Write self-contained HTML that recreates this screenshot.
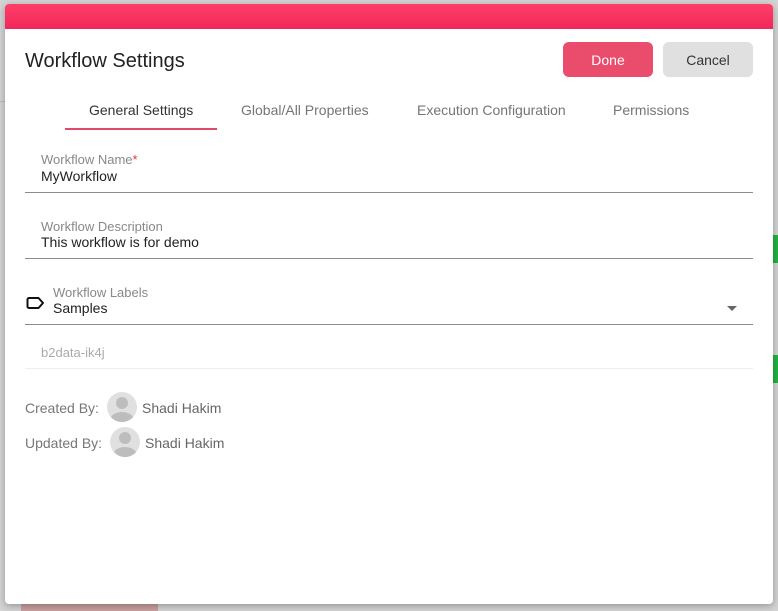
<!DOCTYPE html>
<html><head><style>
body{margin:0;width:778px;height:611px;background:#d4d4d4;position:relative;overflow:hidden;font-family:"Liberation Sans",sans-serif}
.modal{position:absolute;left:5px;top:4px;width:768px;height:600px;background:#fff;border-radius:4px;box-shadow:0 2px 8px rgba(0,0,0,.3);overflow:hidden}
.bar{height:25px;background:linear-gradient(#ff3f68,#f0275a)}
.abs{position:absolute}
.lbl{font-size:13px;color:#888}
.val{font-size:14px;color:#222}
.line{position:absolute;left:20px;width:728px;height:1px;background:#8c8c8c}
.tab{position:absolute;top:98px;font-size:14px;color:#757575}
.av{display:inline-block;width:30px;height:30px;border-radius:50%;background:#e0e0e0;position:absolute;overflow:hidden}
.av:before{content:"";position:absolute;left:9px;top:5px;width:12px;height:12px;border-radius:50%;background:#bdbdbd}
.av:after{content:"";position:absolute;left:3px;top:20px;width:24px;height:16px;border-radius:50%;background:#bdbdbd}
</style></head><body>
<div class="abs" style="left:0;top:101px;width:5px;height:1px;background:#bbb"></div>
<div class="abs" style="left:773px;top:235px;width:5px;height:28px;background:#22b540"></div>
<div class="abs" style="left:773px;top:355px;width:5px;height:28px;background:#22b540"></div>
<div class="abs" style="left:21px;top:604px;width:137px;height:7px;background:#c9a1a1"></div>
<div class="modal">
<div class="bar"></div>
<div class="abs" style="left:20px;top:46px;font-size:20px;color:#222">Workflow Settings</div>
<div class="abs" style="left:558px;top:38px;width:90px;height:35px;background:#ea4c6b;border-radius:6px;color:#fff;font-size:14px;text-align:center;line-height:36px">Done</div>
<div class="abs" style="left:658px;top:38px;width:90px;height:35px;background:#e0e0e0;border-radius:6px;color:#333;font-size:14px;text-align:center;line-height:36px">Cancel</div>
<div class="tab" style="left:84px;color:#333">General Settings</div>
<div class="tab" style="left:236px">Global/All Properties</div>
<div class="tab" style="left:412px">Execution Configuration</div>
<div class="tab" style="left:608px">Permissions</div>
<div class="abs" style="left:60px;top:124px;width:152px;height:2px;background:#e0496a"></div>
<div class="abs lbl" style="left:36px;top:148px">Workflow Name<span style="color:#e53935">*</span></div>
<div class="abs val" style="left:36px;top:164px">MyWorkflow</div>
<div class="line" style="top:188px"></div>
<div class="abs lbl" style="left:36px;top:215px">Workflow Description</div>
<div class="abs val" style="left:36px;top:230px">This workflow is for demo</div>
<div class="line" style="top:254px"></div>
<svg class="abs" style="left:21px;top:292px" width="20" height="14" viewBox="0 0 20 14"><path d="M3 2h9.5l4.5 5-4.5 5H3a1.5 1.5 0 0 1-1.5-1.5v-7A1.5 1.5 0 0 1 3 2z" fill="none" stroke="#111" stroke-width="2" stroke-linejoin="round"/></svg>
<div class="abs lbl" style="left:48px;top:281px">Workflow Labels</div>
<div class="abs val" style="left:48px;top:296px">Samples</div>
<div class="abs" style="left:722px;top:302px;width:0;height:0;border-left:5px solid transparent;border-right:5px solid transparent;border-top:5px solid #666"></div>
<div class="line" style="top:320px"></div>
<div class="abs" style="left:36px;top:341px;font-size:13px;color:#aaa">b2data-ik4j</div>
<div class="line" style="top:364px;background:#eee"></div>
<div class="abs" style="left:20px;top:396px;font-size:14px;color:#777">Created By:</div>
<div class="av" style="left:102px;top:388px"></div>
<div class="abs" style="left:137px;top:396px;font-size:14px;color:#666">Shadi Hakim</div>
<div class="abs" style="left:20px;top:431px;font-size:14px;color:#777">Updated By:</div>
<div class="av" style="left:105px;top:423px"></div>
<div class="abs" style="left:140px;top:431px;font-size:14px;color:#666">Shadi Hakim</div>
</div>
</body></html>
